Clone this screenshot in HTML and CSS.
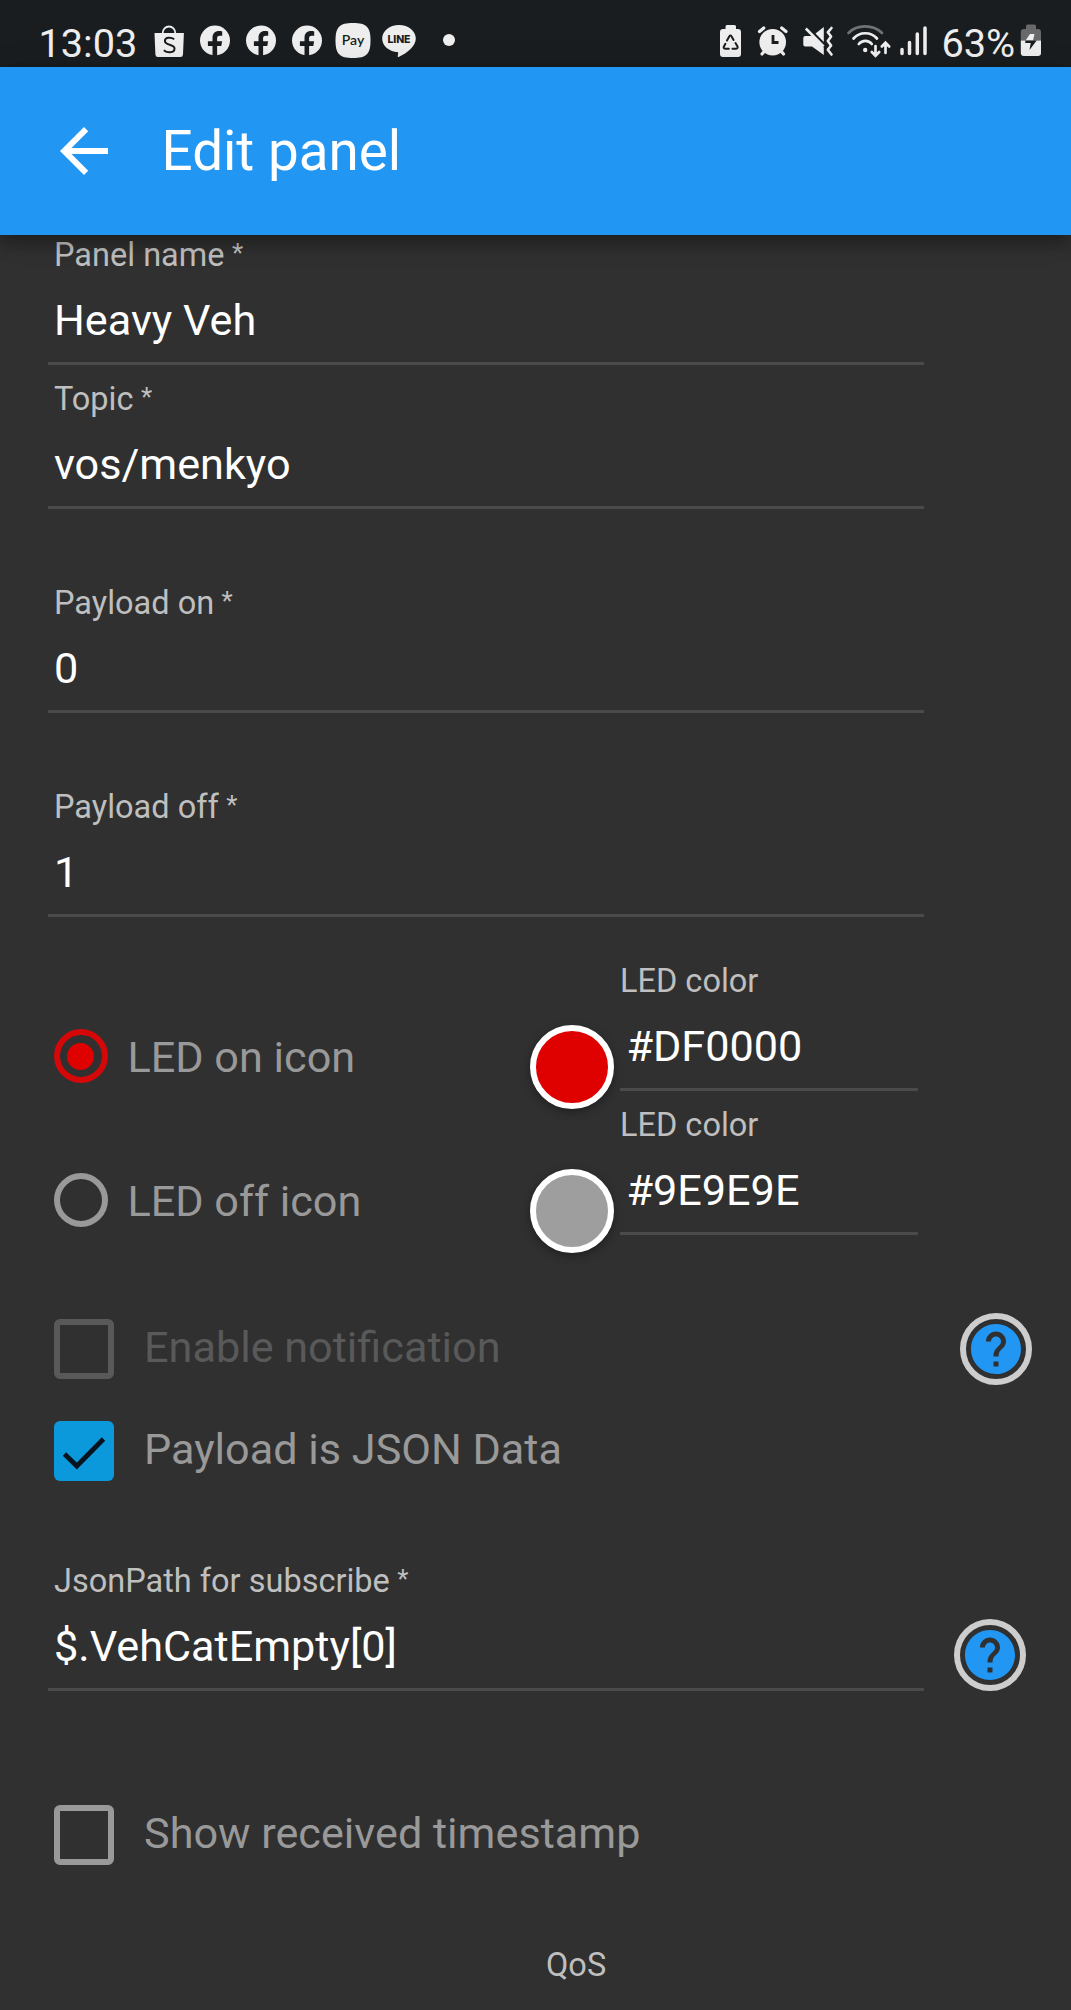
FILE: index.html
```
<!DOCTYPE html>
<html lang="en">
<head>
<meta charset="utf-8">
<title>Edit panel</title>
<link rel="stylesheet" href="styles.css">
</head>
<body>
<svg width="0" height="0" class="defs">
  <symbol id="facebook" viewBox="0 0 46 67">
    <circle cx="23" cy="40.5" r="15" fill="#eee"/>
    <path d="M20.500 56V46h-4.600v-4.800h4.600v-3.200c0-4.700 2.500-6.900 6.500-6.900 1.300 0 2.300.1 3.200.3v4.300h-2.400c-2.200 0-2.700 1-2.700 2.800v2.700h5l-.8 4.800h-4.200v10z" fill="#191d20"/>
  </symbol>
  <symbol id="help" viewBox="0 0 24 24">
    <path d="M12 2C6.480 2 2 6.480 2 12s4.480 10 10 10 10-4.480 10-10S17.520 2 12 2zm1 17h-2v-2h2v2zm2.070-7.750l-.9.92C13.450 12.900 13 13.500 13 15h-2v-.5c0-1.100.45-2.100 1.170-2.830l1.240-1.260c.37-.36.59-.86.59-1.410 0-1.100-.9-2-2-2s-2 .9-2 2H8c0-2.210 1.790-4 4-4s4 1.790 4 4c0 .88-.36 1.680-.93 2.250z" fill="#2196f3"/>
  </symbol>
</svg>

<div class="status">
  <span class="clock">13:03</span>
  <div class="apps">
    <svg width="46" height="67" viewBox="0 0 46 67"><path d="M8.500 33h29.400l-.9 21.500q-.1 2.500-2.600 2.500H12q-2.500 0-2.600-2.500z" fill="#eee"/><path d="M16.500 34c0-10 13-10 13 0" fill="none" stroke="#eee" stroke-width="1.800"/><path d="M28.200 39.200c-2.300-1.700-9.300-2.500-9.300 1.700 0 4.700 9.600 2.900 9.600 7.600 0 5-7.600 4.500-10.700 1.700" fill="none" stroke="#191d20" stroke-width="2"/></svg>
    <svg width="46" height="67"><use href="#facebook"/></svg>
    <svg width="46" height="67"><use href="#facebook"/></svg>
    <svg width="46" height="67"><use href="#facebook"/></svg>
    <svg width="46" height="67" viewBox="0 0 46 67"><path d="M23 23c13.500 0 17.500 4 17.500 17.500S36.500 58 23 58 5.500 54 5.500 40.500 9.500 23 23 23z" fill="#eee"/><text x="23" y="45" class="pay" text-anchor="middle">Pay</text></svg>
    <svg width="46" height="67" viewBox="0 0 46 67"><path d="M23 25c9.500 0 16.800 6 16.800 13.500 0 7.500-8.200 14.500-17.200 18.500-.8.300-1-.1-.8-1l.4-3.800C13 51.700 6.200 46 6.200 38.500 6.200 31 13.500 25 23 25z" fill="#eee"/><text x="23" y="43.300" class="line-logo" text-anchor="middle" textLength="23">LINE</text></svg>
  </div>
  <span class="dot"></span>
  <div class="system">
    <svg width="34" height="67" viewBox="715 0 34 67"><path d="M725.500 28v-1.500q0-1.500 1.500-1.500h7.500q1.500 0 1.500 1.500V29h2q3 0 3 3v22q0 3-3 3h-15q-3 0-3-3V32q0-3 3-3h2.500z" fill="#eee"/><g fill="none" stroke="#191d20" stroke-width="2" stroke-linecap="round" stroke-linejoin="round"><path d="M727 40.500l2.200-4q1.200-1.800 2.400 0l2 3.400M735.500 43l2 3.500q.7 2-1.500 2.200h-3.500M728.800 48.700h-3.600q-2.200-.2-1.300-2.200l1.500-2.700"/></g></svg>
    <svg width="48" height="67" viewBox="749 0 48 67"><circle cx="772.700" cy="42.200" r="13.300" fill="#eee"/><path d="M759.500 31.500l4.300-3.500M781.700 28l4.300 3.500M762 54l3-3.500M783.500 54l-3-3.500" stroke="#eee" stroke-width="3.200" stroke-linecap="round"/><path d="M773 35v7.500h5.500" fill="none" stroke="#191d20" stroke-width="2.800"/></svg>
    <svg width="44" height="67" viewBox="797 0 44 67"><path d="M815.500 33.500l8.300-6.500v15zM803.300 38q0-2 2-2h6.700l11.800 11.500V55L812 46.500h-6.700q-2 0-2-2z" fill="#eee"/><path d="M805.800 28.500l17.800 18" stroke="#eee" stroke-width="2.500"/><path d="M831.500 28l-3.700 4.300 3.300 4.200-3.300 4.500 3.300 4.500-3.300 4.200 3.700 4.800" fill="none" stroke="#eee" stroke-width="2.600" stroke-linejoin="round" stroke-linecap="round"/></svg>
    <svg width="54" height="67" viewBox="841 0 54 67"><g fill="none" stroke-width="2.700" stroke-linecap="round" stroke="#eee"><path d="M848.500 33c8.500-8.700 24.500-8.700 33.500 0" stroke="#707375"/><path d="M853.500 38.500c6-7 17.500-7 23.500 0M858.800 44c3.500-4.200 9.700-4.200 13 0M875.500 46v9M871.800 52l3.700 3.800 3.700-3.800M885.500 53v-9.500M881.800 46.500l3.700-3.800 3.700 3.800"/></g><circle cx="865.200" cy="50" r="2.200" fill="#eee"/></svg>
    <svg width="40" height="67" viewBox="895 0 40 67"><path d="M902 49.500v4M909.500 42.500v11M917.300 34v19.500M925 28v25.500" stroke="#eee" stroke-width="3.500" stroke-linecap="round"/></svg>
    <span class="percent">63%</span>
    <svg width="34" height="67" viewBox="1014 0 34 67"><path d="M1026 29v-3q0-1.500 1.500-1.500h7q1.500 0 1.500 1.500v3h2q3 0 3 3v8.500h-20.200V32q0-3 3-3z" fill="#67696b"/><path d="M1020.800 40.500H1041V53q0 3-3 3h-14.200q-3 0-3-3z" fill="#eee"/><path d="M1030 34h4.500l-1.500 6.500h-7.500z" fill="#eee"/><path d="M1025.500 40.500h11.200l-7.200 9.500 1.200-7h-5.500z" fill="#191d20"/></svg>
  </div>
</div>

<header class="appbar">
  <svg class="back" width="72" height="72" viewBox="0 0 24 24"><path d="M20 11H7.830l5.590-5.590L12 4l-8 8 8 8 1.410-1.410L7.830 13H20v-2z" fill="#fff"/></svg>
  <h1 class="title">Edit panel</h1>
</header>

<main class="form">
  <div class="field"><label class="label">Panel name<span class="req"> *</span></label><div class="value">Heavy Veh</div></div>
  <div class="field near"><label class="label">Topic<span class="req"> *</span></label><div class="value">vos/menkyo</div></div>
  <div class="field spaced"><label class="label">Payload on<span class="req"> *</span></label><div class="value">0</div></div>
  <div class="field spaced"><label class="label">Payload off<span class="req"> *</span></label><div class="value">1</div></div>

  <div class="led-row first">
    <div class="radio on"></div><span class="radio-label">LED on icon</span>
    <div class="swatch red"></div>
    <div class="field color"><label class="label">LED color</label><div class="value">#DF0000</div></div>
  </div>
  <div class="led-row">
    <div class="radio"></div><span class="radio-label">LED off icon</span>
    <div class="swatch grey"></div>
    <div class="field color"><label class="label">LED color</label><div class="value">#9E9E9E</div></div>
  </div>

  <div class="check-row notify disabled"><div class="box"></div><span class="check-label">Enable notification</span><div class="help"><svg width="60" height="60"><use href="#help"/></svg></div></div>
  <div class="check-row json"><div class="box checked"><svg width="60" height="60" viewBox="0 0 60 60"><path d="M10.500 33l12.300 12L49.500 18" fill="none" stroke="#07141f" stroke-width="4.800"/></svg></div><span class="check-label">Payload is JSON Data</span></div>

  <div class="path-row">
    <div class="field"><label class="label">JsonPath for subscribe<span class="req"> *</span></label><div class="value">$.VehCatEmpty[0]</div></div>
    <div class="help"><svg width="60" height="60"><use href="#help"/></svg></div>
  </div>

  <div class="check-row stamp"><div class="box"></div><span class="check-label">Show received timestamp</span></div>
  <div class="label qos">QoS</div>
</main>
</body>
</html>
```
FILE: styles.css
```
* { box-sizing: border-box; }
body {
  margin: 0;
  width: 1071px;
  height: 2010px;
  overflow: hidden;
  background: #303030;
  font-family: Roboto, sans-serif;
}
svg { display: block; flex: none; }
.defs { display: none; }

.status {
  display: flex;
  height: 67px;
  padding-left: 38.5px;
  background: #191d20;
  color: #eee;
  font-size: 39.7px;
  line-height: 67px;
}
.clock, .percent { height: 67px; padding-top: 9.500px; }
.clock { width: 107.500px; }
.apps, .system { display: flex; }
.dot {
  width: 12px;
  height: 12px;
  margin: 34px 0 0 21px;
  border-radius: 50%;
  background: #eee;
}
.system { margin-left: 260px; }
.percent { width: 72.500px; margin: 0 0 0 6.500px; }
.pay { font: 600 14px Lato, sans-serif; fill: #191d20; }
.line-logo { font: 800 10.500px Inter, sans-serif; fill: #191d20; }

.appbar {
  display: flex;
  align-items: center;
  position: relative;
  z-index: 1;
  height: 168px;
  padding-left: 48px;
  background: #2196f3;
  box-shadow: 0 6px 12px -3px rgba(0,0,0,.2), 0 12px 15px rgba(0,0,0,.14), 0 3px 30px rgba(0,0,0,.12);
}
.title {
  margin: 0 0 0 41.500px;
  color: #fff;
  font-size: 54.800px;
  font-weight: 400;
  line-height: 70px;
}

.form { display: flex; flex-direction: column; }
.field {
  width: 876px;
  height: 130px;
  margin-left: 48px;
  padding-left: 6px;
  border-bottom: 3px solid #4a4a4a;
}
.field.near { margin-top: 14px; }
.field.spaced { margin-top: 74px; }
.label {
  display: block;
  height: 40px;
  color: #bfbfbf;
  font-size: 32.500px;
  line-height: 40px;
}
.req { margin-left: 1px; font-size: 26px; line-height: 1; vertical-align: 4px; }
.value {
  margin-top: 21px;
  color: #fff;
  font-size: 43.200px;
  line-height: 50px;
}

.led-row { display: flex; height: 130px; margin-top: 14px; padding-left: 53.500px; }
.led-row.first { margin-top: 44px; }
.radio {
  display: flex;
  flex: none;
  width: 54px;
  height: 54px;
  margin-top: 68px;
  border: 6px solid #999;
  border-radius: 50%;
}
.radio.on { border-color: #d40808; }
.radio.on::after {
  content: "";
  width: 27px;
  height: 27px;
  margin: auto;
  border-radius: 50%;
  background: #df0000;
}
.radio-label, .check-label { color: #999; font-size: 43.200px; line-height: 60px; }
.radio-label { width: 422.500px; margin-top: 67px; padding-left: 20px; }
.swatch {
  width: 84px;
  height: 84px;
  margin-top: 64px;
  border: 6px solid #fff;
  border-radius: 50%;
  box-shadow: 0 3px 10px rgba(0,0,0,.35);
}
.red { background: #df0000; }
.grey { background: #9e9e9e; }
.field.color { width: 298px; margin-left: 6px; padding-left: 0; }
.color .value { padding-left: 6.400px; }

.check-row { display: flex; height: 60px; padding-left: 54px; }
.notify { margin-top: 84px; }
.json { margin-top: 42px; }
.stamp { margin-top: 114px; }
.box {
  flex: none;
  width: 60px;
  height: 60px;
  border: 6px solid #999;
  border-radius: 6px;
}
.box.checked { border: 0; background: #0c99dc; }
.check-label { width: 816px; padding-left: 30px; line-height: 58px; }
.disabled .box { border-color: #595959; }
.disabled .check-label { color: #595959; }

.help {
  display: flex;
  flex: none;
  align-items: center;
  justify-content: center;
  width: 72px;
  height: 72px;
  border: 6px solid #cdcdcd;
  border-radius: 50%;
}
.notify .help { margin: -6px 0 0 30px; }
.path-row { display: flex; margin-top: 80px; }
.path-row .help { margin: 58px 0 0 30px; }
.qos { margin: 80px 0 0 546px; }
```
